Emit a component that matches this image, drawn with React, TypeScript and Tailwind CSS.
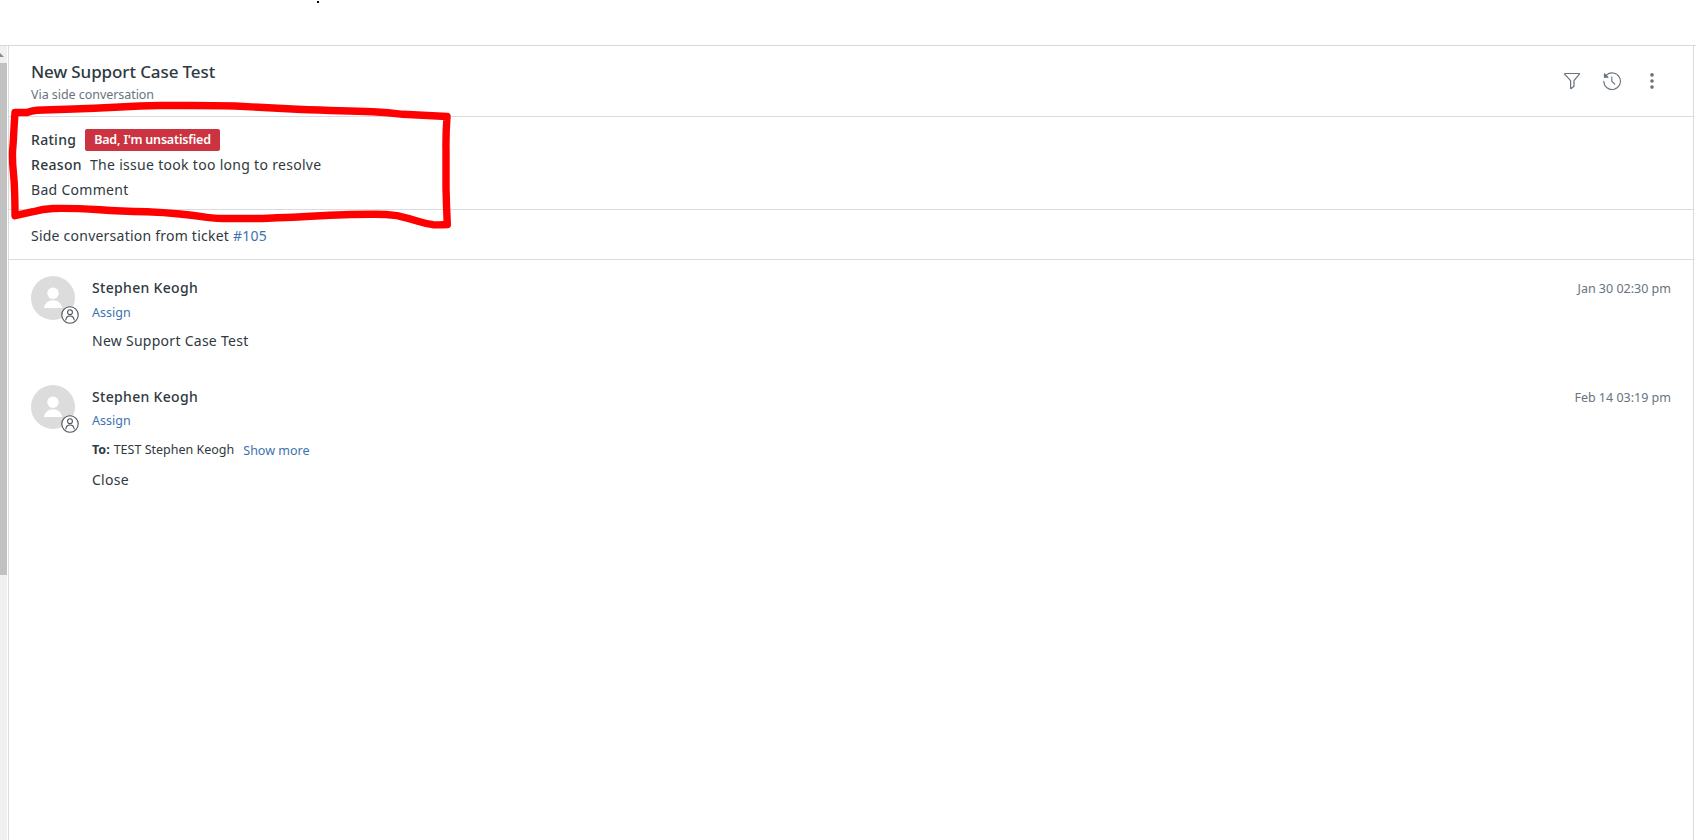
import type { ReactNode } from "react";

interface Message {
  id: number;
  author: string;
  date: string;
  body: string;
  recipients?: string;
}

const messages: Message[] = [
  { id: 1, author: "Stephen Keogh", date: "Jan 30 02:30 pm", body: "New Support Case Test" },
  {
    id: 2,
    author: "Stephen Keogh",
    date: "Feb 14 03:19 pm",
    body: "Close",
    recipients: "TEST Stephen Keogh",
  },
];

const FilterIcon = () => (
  <svg className="h-[18px] w-[18px]" viewBox="0 0 18 18" fill="none" stroke="currentColor" strokeWidth="1.2" strokeLinejoin="round">
    <path d="M1.8 1.5h14.4c.3 0 .4.4.2.6L11 8.6v5.6l-2.8 2.3c-.2.2-.6 0-.6-.3V8.6L1.6 2.1c-.2-.2-.1-.6.2-.6z" />
  </svg>
);

const HistoryIcon = () => (
  <svg className="h-[18px] w-[18px]" viewBox="0 0 18 18" fill="none" stroke="currentColor" strokeWidth="1.1" strokeLinecap="round">
    <path d="M3.4 3.2A8.3 8.3 0 1 1 .8 9.2" />
    <path d="M8.8 4.8v4.4l3 3" />
    <path d="M1.4 1.8v3.4h3.600z" fill="currentColor" strokeLinejoin="round" />
  </svg>
);

const MoreIcon = () => (
  <svg className="h-[18px] w-[18px]" viewBox="0 0 18 18" fill="currentColor">
    <circle cx="9" cy="2.9" r="1.8" />
    <circle cx="9" cy="9" r="1.8" />
    <circle cx="9" cy="15.1" r="1.8" />
  </svg>
);

const Avatar = () => (
  <div className="relative h-11 w-11 shrink-0">
    <svg className="h-11 w-11" viewBox="0 0 44 44">
      <circle cx="22" cy="22" r="22" fill="#dcdcdc" />
      <circle cx="22" cy="17.2" r="5.7" fill="#fff" />
      <path d="M12.8 32c1-4.8 4.6-7.7 9.2-7.7s8.2 2.9 9.2 7.7z" fill="#fff" />
    </svg>
    <svg className="absolute top-[30px] left-[30px] h-[18px] w-[18px]" viewBox="0 0 18 18" fill="#fff" stroke="#4b5157" strokeWidth="1.1">
      <circle cx="9" cy="9" r="8.2" />
      <circle cx="9" cy="6.2" r="2.4" />
      <path d="M4.8 14c.3-2.500 2-4 4.200-4s3.900 1.500 4.200 4" strokeLinecap="round" />
    </svg>
  </div>
);

const Link = ({ children, className }: { children: ReactNode; className?: string }) => (
  <a className={`cursor-pointer text-[#3c72ae] ${className ?? ""}`}>{children}</a>
);

const MessageRow = ({ message }: { message: Message }) => (
  <article className="flex h-[109px] gap-[17px] pr-[22px] pl-[22px]">
    <Avatar />
    <div className="flex min-w-0 flex-1 flex-col pt-0.5 leading-5">
      <div className="flex justify-between">
        <h2 className="text-[14px] font-medium tracking-[0.32px]">{message.author}</h2>
        <time className="relative top-px text-[12.5px] text-[#68737d]">{message.date}</time>
      </div>
      <Link className={message.recipients ? "mt-1 text-[12.5px]" : "mt-[5px] text-[12.5px]"}>Assign</Link>
      {message.recipients && (
        <div className="mt-[9px] flex text-[12.5px]">
          <span className="mr-1 font-bold">To:</span>
          <span>{message.recipients}</span>
          <Link className="relative top-px ml-[9px]">Show more</Link>
        </div>
      )}
      <p className={message.recipients ? "mt-[10px] text-[14px] tracking-[0.27px]" : "mt-2 text-[14px] tracking-[0.27px]"}>
        {message.body}
      </p>
    </div>
  </article>
);

// Hand-drawn marker around the satisfaction rating
const Highlight = () => (
  <svg
    className="pointer-events-none absolute top-0 left-0 h-[240px] w-[480px]"
    viewBox="0 0 480 240"
    fill="none"
    stroke="#ff0000"
    strokeWidth="7.4"
    strokeLinecap="round"
    strokeLinejoin="round"
  >
    <path d="M15 112.500H27Q31 110.800 37 110.300Q50 109.500 67 109.300Q95 108.500 120 107Q140 105.800 160 105.500H190Q215 105.500 235 106L297 109.300Q345 111 373 111.700Q388 112.500 403 114.300L447 116.500Q445.700 135 446 150V188Q446.500 208 447.300 224.500Q440 225.200 433 224.700Q425 223.500 417 221Q407 218 397 215.700Q385 214.200 373 214.300Q350 214.500 330 215.300Q290 217.500 263 218.500H230Q216 218.500 207 217.300Q194 215.500 180 214Q163 212.300 147 211.700Q120 211.200 100 209.700Q70 208 53 208.500Q43 209 33 211.700L15 215.700Q15 205 14.700 195Q14.500 183 13.300 171.700Q12.300 163 12.500 152Q13.500 140 14 128Z" />
  </svg>
);

const App = () => {
  return (
    <div className="relative flex h-[840px] w-[1696px] flex-col overflow-hidden bg-white font-['Noto_Sans',sans-serif] text-[#2f3941]">
      <div className="flex h-[45px] items-start pl-[317px]">
        <span className="mt-px h-[2px] w-[2px] bg-black" />
      </div>
      <div className="flex min-h-0 flex-1 border-t border-[#d8d8d8]">
        <div className="mr-px flex w-[7px] flex-col bg-[#f0f0f0]">
          <svg className="h-[17px] w-[7px]" viewBox="0 0 7 17" fill="#8c8c8c">
            <path d="M-4 11L0 7l4 4z" />
          </svg>
          <div className="h-[512px] bg-[#c1c1c1]" />
        </div>
        <main className="w-[1686px] border-r border-l border-[#d8dcde] bg-white">
          <header className="flex h-[71px] border-b border-[#d8dcde] pl-[22px]">
            <div className="flex-1 pt-[14px]">
              <h1 className="text-[17px] leading-6 font-medium tracking-[-0.1px]">New Support Case Test</h1>
              <p className="mt-px text-[12.5px] leading-5 tracking-[-0.05px] text-[#68737d]">Via side conversation</p>
            </div>
            <div className="flex gap-[22px] pt-[26px] pr-[32px] text-[#68737d]">
              <FilterIcon />
              <HistoryIcon />
              <MoreIcon />
            </div>
          </header>

          <section className="flex h-[93px] flex-col gap-[5px] border-b border-[#d8dcde] pt-[13px] pl-[22px] text-[14px] leading-5 tracking-[0.3px]">
            <div className="flex h-5 items-center">
              <span className="w-[54px] font-medium">Rating</span>
              <span className="flex h-[22px] w-[135px] items-center justify-center rounded-[2px] bg-[#cc3340] text-[12.5px] font-semibold tracking-[-0.18px] text-white">
                Bad, I'm unsatisfied
              </span>
            </div>
            <div className="flex">
              <span className="w-[59px] font-medium">Reason</span>
              <span>The issue took too long to resolve</span>
            </div>
            <p>Bad Comment</p>
          </section>

          <section className="h-[50px] border-b border-[#d8dcde] pt-[16px] pl-[22px] text-[14px] leading-5 tracking-[0.23px]">
            Side conversation from ticket <Link>#105</Link>
          </section>

          <div className="pt-4">
            {messages.map((message) => (
              <MessageRow key={message.id} message={message} />
            ))}
          </div>
        </main>
      </div>
      <Highlight />
    </div>
  );
};

export default App;
